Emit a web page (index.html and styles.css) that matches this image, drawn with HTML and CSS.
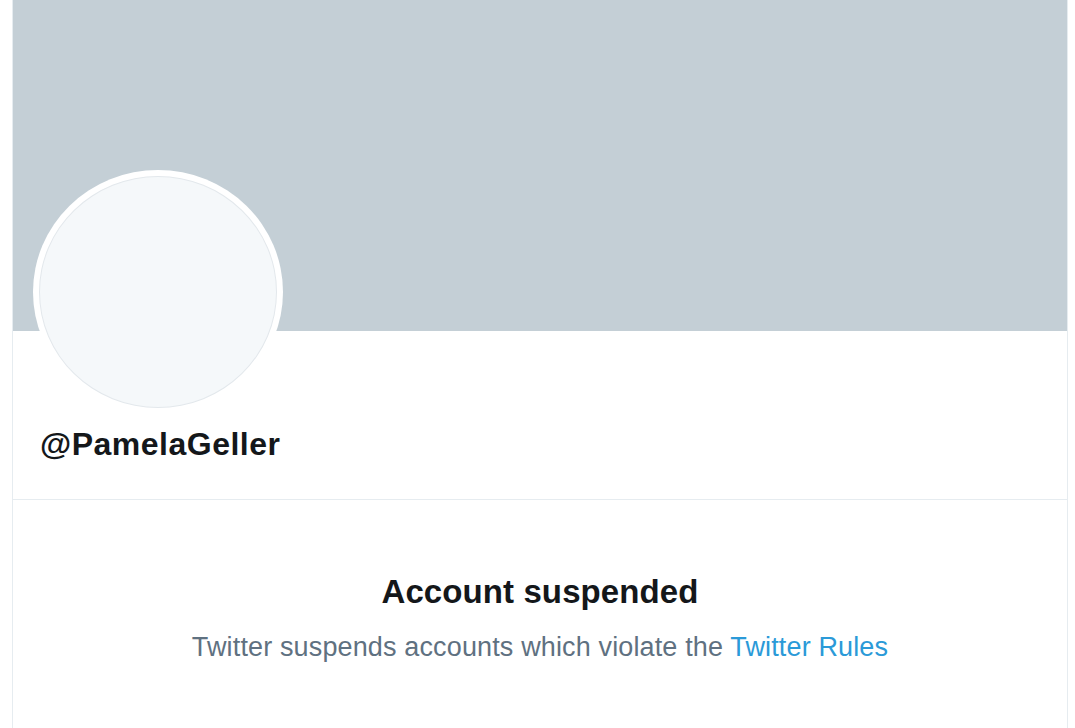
FILE: index.html
```html
<!DOCTYPE html>
<html lang="en">
<head>
<meta charset="utf-8">
<title>@PamelaGeller</title>
<link rel="stylesheet" href="styles.css">
</head>
<body>
<main class="profile">
  <div class="banner"></div>
  <div class="header">
    <div class="avatar"><div class="avatar-inner"></div></div>
    <div class="handle">@PamelaGeller</div>
  </div>
  <section class="notice">
    <h1 class="notice-title">Account suspended</h1>
    <p class="notice-text">Twitter suspends accounts which violate the <a class="notice-link" href="#">Twitter Rules</a></p>
  </section>
</main>
</body>
</html>
```
FILE: styles.css
```css
html, body {
  margin: 0;
  padding: 0;
  background: #ffffff;
  height: 100%;
}

body {
  font-family: "Liberation Sans", Arial, sans-serif;
  color: #14171a;
}

.profile {
  margin-left: 12px;
  width: 1056px;
  min-height: 728px;
  border-left: 1px solid #e6ecf0;
  border-right: 1px solid #e6ecf0;
  box-sizing: border-box;
}

.banner {
  height: 331px;
  background: #c4cfd6;
}

.header {
  padding: 0 0 36px 27px;
  border-bottom: 1px solid #e6ecf0;
}

.avatar {
  width: 250px;
  height: 244px;
  margin-top: -161px;
  margin-left: -7px;
  padding: 6px;
  box-sizing: border-box;
  border-radius: 50%;
  background: #ffffff;
  position: relative;
}

.avatar-inner {
  width: 100%;
  height: 100%;
  box-sizing: border-box;
  border-radius: 50%;
  border: 1px solid #e3e8ec;
  background: #f5f8fa;
}

.handle {
  margin-top: 11px;
  font-size: 32px;
  line-height: 38px;
  font-weight: 700;
  color: #14171a;
  letter-spacing: 0.5px;
}

.notice {
  padding-top: 72px;
  text-align: center;
}

.notice-title {
  margin: 0;
  font-size: 33px;
  line-height: 40px;
  font-weight: 700;
  color: #14171a;
  letter-spacing: 0.1px;
}

.notice-text {
  margin: 19px 0 0;
  font-size: 27px;
  line-height: 32px;
  color: #5f7181;
  letter-spacing: 0.14px;
}

.notice-link {
  color: #2b9ad8;
  text-decoration: none;
}
```
